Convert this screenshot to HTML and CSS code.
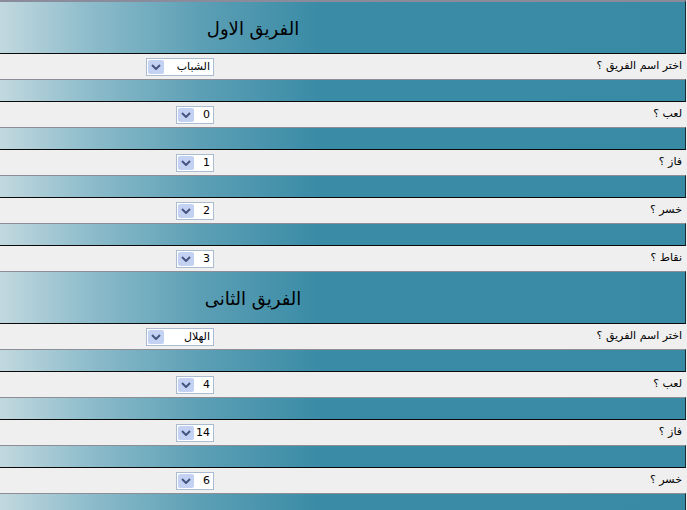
FILE: index.html
```html
<!DOCTYPE html>
<html lang="ar">
<head>
<meta charset="utf-8">
<link rel="stylesheet" href="styles.css">
</head>
<body>
<div class="page">
  <div class="head first"><div class="title">الفريق الاول</div></div>
  <div class="row">
    <div class="ctl"><div class="sel wide"><span class="btn"><svg width="10" height="6" viewBox="0 0 10 6"><path d="M1 1 L5 5 L9 1" fill="none" stroke="#44557f" stroke-width="2"/></svg></span><span class="val">الشباب</span></div></div>
    <div class="lbl">اختر اسم الفريق ؟</div>
  </div>
  <div class="band"></div>
  <div class="row">
    <div class="ctl"><div class="sel"><span class="btn"><svg width="10" height="6" viewBox="0 0 10 6"><path d="M1 1 L5 5 L9 1" fill="none" stroke="#44557f" stroke-width="2"/></svg></span><span class="val">0</span></div></div>
    <div class="lbl">لعب ؟</div>
  </div>
  <div class="band"></div>
  <div class="row">
    <div class="ctl"><div class="sel"><span class="btn"><svg width="10" height="6" viewBox="0 0 10 6"><path d="M1 1 L5 5 L9 1" fill="none" stroke="#44557f" stroke-width="2"/></svg></span><span class="val">1</span></div></div>
    <div class="lbl">فاز ؟</div>
  </div>
  <div class="band"></div>
  <div class="row">
    <div class="ctl"><div class="sel"><span class="btn"><svg width="10" height="6" viewBox="0 0 10 6"><path d="M1 1 L5 5 L9 1" fill="none" stroke="#44557f" stroke-width="2"/></svg></span><span class="val">2</span></div></div>
    <div class="lbl">خسر ؟</div>
  </div>
  <div class="band"></div>
  <div class="row">
    <div class="ctl"><div class="sel"><span class="btn"><svg width="10" height="6" viewBox="0 0 10 6"><path d="M1 1 L5 5 L9 1" fill="none" stroke="#44557f" stroke-width="2"/></svg></span><span class="val">3</span></div></div>
    <div class="lbl">نقاط ؟</div>
  </div>
  <div class="head"><div class="title">الفريق الثانى</div></div>
  <div class="row">
    <div class="ctl"><div class="sel wide"><span class="btn"><svg width="10" height="6" viewBox="0 0 10 6"><path d="M1 1 L5 5 L9 1" fill="none" stroke="#44557f" stroke-width="2"/></svg></span><span class="val">الهلال</span></div></div>
    <div class="lbl">اختر اسم الفريق ؟</div>
  </div>
  <div class="band"></div>
  <div class="row">
    <div class="ctl"><div class="sel"><span class="btn"><svg width="10" height="6" viewBox="0 0 10 6"><path d="M1 1 L5 5 L9 1" fill="none" stroke="#44557f" stroke-width="2"/></svg></span><span class="val">4</span></div></div>
    <div class="lbl">لعب ؟</div>
  </div>
  <div class="band"></div>
  <div class="row">
    <div class="ctl"><div class="sel"><span class="btn"><svg width="10" height="6" viewBox="0 0 10 6"><path d="M1 1 L5 5 L9 1" fill="none" stroke="#44557f" stroke-width="2"/></svg></span><span class="val">14</span></div></div>
    <div class="lbl">فاز ؟</div>
  </div>
  <div class="band"></div>
  <div class="row">
    <div class="ctl"><div class="sel"><span class="btn"><svg width="10" height="6" viewBox="0 0 10 6"><path d="M1 1 L5 5 L9 1" fill="none" stroke="#44557f" stroke-width="2"/></svg></span><span class="val">6</span></div></div>
    <div class="lbl">خسر ؟</div>
  </div>
  <div class="band"></div>
</div>
</body>
</html>
```

FILE: styles.css
```css
html, body {
  margin: 0;
  padding: 0;
  background: #efefef;
}
.page {
  width: 686px;
  font-family: "DejaVu Sans", sans-serif;
  font-size: 11px;
  color: #000;
  overflow: hidden;
  height: 510px;
}
.head, .band {
  background: linear-gradient(to right, #c2d8df 0px, #8dbccb 90px, #5c9fb5 200px, #3a8ba6 320px, #388aa5 100%);
  border-top: 1px solid #8e8e96;
  border-bottom: 1px solid #0a0a0a;
  border-right: 1px solid #1e2a30;
  box-sizing: border-box;
}
.head {
  height: 53px;
  display: flex;
  align-items: center;
}
.head.first {
  height: 54px;
  border-top: 2px solid #8a8c9c;
}
.title {
  width: 506px;
  text-align: center;
  font-size: 18px;
  padding-top: 1px;
}
.band {
  height: 23px;
}
.row {
  height: 25px;
  display: grid;
  grid-template-columns: 214px 1fr;
  align-items: center;
  background: #efefef;
}
.ctl {
  display: flex;
  justify-content: flex-end;
}
.lbl {
  direction: rtl;
  text-align: right;
  padding-right: 4px;
  padding-bottom: 2px;
}
.sel {
  width: 38px;
  height: 18px;
  box-sizing: border-box;
  border: 1px solid #a9bcd2;
  background: #fff;
  display: flex;
  align-items: center;
  padding-left: 1px;
}
.sel.wide {
  width: 68px;
}
.btn {
  width: 16px;
  height: 14px;
  background: #c3d1f3;
  border-radius: 2px;
  display: flex;
  align-items: center;
  justify-content: center;
  flex: none;
}
.val {
  flex: 1;
  text-align: right;
  direction: rtl;
  padding-right: 3px;
  font-size: 11px;
}
```
